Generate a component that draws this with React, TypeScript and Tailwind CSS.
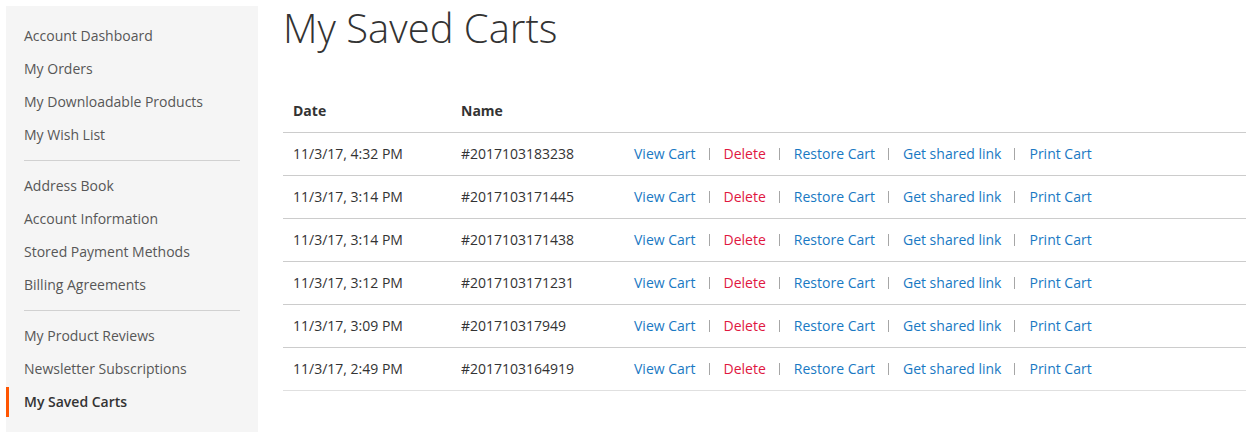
const NAV_GROUPS: { label: string; active?: boolean }[][] = [
  [
    { label: "Account Dashboard" },
    { label: "My Orders" },
    { label: "My Downloadable Products" },
    { label: "My Wish List" },
  ],
  [
    { label: "Address Book" },
    { label: "Account Information" },
    { label: "Stored Payment Methods" },
    { label: "Billing Agreements" },
  ],
  [
    { label: "My Product Reviews" },
    { label: "Newsletter Subscriptions" },
    { label: "My Saved Carts", active: true },
  ],
];

const CARTS = [
  { date: "11/3/17, 4:32 PM", name: "#2017103183238" },
  { date: "11/3/17, 3:14 PM", name: "#2017103171445" },
  { date: "11/3/17, 3:14 PM", name: "#2017103171438" },
  { date: "11/3/17, 3:12 PM", name: "#2017103171231" },
  { date: "11/3/17, 3:09 PM", name: "#201710317949" },
  { date: "11/3/17, 2:49 PM", name: "#2017103164919" },
];

const ACTIONS = ["View Cart", "Delete", "Restore Cart", "Get shared link", "Print Cart"];

function Sidebar() {
  return (
    <aside className="w-[252px] shrink-0 bg-[#f5f5f5] py-[15px] self-start">
      {NAV_GROUPS.map((group, gi) => (
        <div key={gi}>
          {gi > 0 && <div className="mx-[18px] my-[10px] border-t border-[#d1d1d1]" />}
          <ul className="flex flex-col gap-[3px]">
            {group.map((item) => (
              <li
                key={item.label}
                className={`h-[30px] flex items-center border-l-[3px] pl-[15px] text-[14px] leading-5 ${
                  item.active ? "border-[#ff5501] text-[#333] font-semibold" : "border-transparent text-[#575757]"
                }`}
              >
                {item.label}
              </li>
            ))}
          </ul>
        </div>
      ))}
    </aside>
  );
}

export default function App() {
  return (
    <div
      className="w-[1259px] h-[438px] bg-white flex pl-[6px] pr-[13px] pt-[6px] text-[#333]"
      style={{ fontFamily: '"Open Sans", "Liberation Sans", sans-serif' }}
    >
      <Sidebar />
      <main className="flex-1 ml-[25px]">
        <h1 className="text-[40px] leading-[44px] font-light text-[#333]">My Saved Carts</h1>
        <table className="mt-[40px] w-full text-[14px] leading-5 border-b border-[#e0e0e0]">
          <thead>
            <tr className="border-b border-[#ccc]">
              <th className="w-[168px] px-[10px] py-[11px] text-left font-bold">Date</th>
              <th className="w-[173px] px-[10px] py-[11px] text-left font-bold">Name</th>
              <th className="px-[10px] py-[11px]" />
            </tr>
          </thead>
          <tbody>
            {CARTS.map((cart, i) => (
              <tr key={cart.name} className={i > 0 ? "border-t border-[#ccc]" : ""}>
                <td className="px-[10px] py-[11px]">{cart.date}</td>
                <td className="px-[10px] py-[11px]">{cart.name}</td>
                <td className="px-[10px] py-[11px]">
                  <div className="flex items-center">
                    {ACTIONS.map((a, ai) => (
                      <div key={a} className="flex items-center">
                        <a className={a === "Delete" ? "text-[#e0173f]" : "text-[#1979c3]"}>{a}</a>
                        {ai < ACTIONS.length - 1 && (
                          <span className="ml-[13px] mr-[14px] h-[12px] border-l border-[#a6a6a6]" />
                        )}
                      </div>
                    ))}
                  </div>
                </td>
              </tr>
            ))}
          </tbody>
        </table>
      </main>
    </div>
  );
}
